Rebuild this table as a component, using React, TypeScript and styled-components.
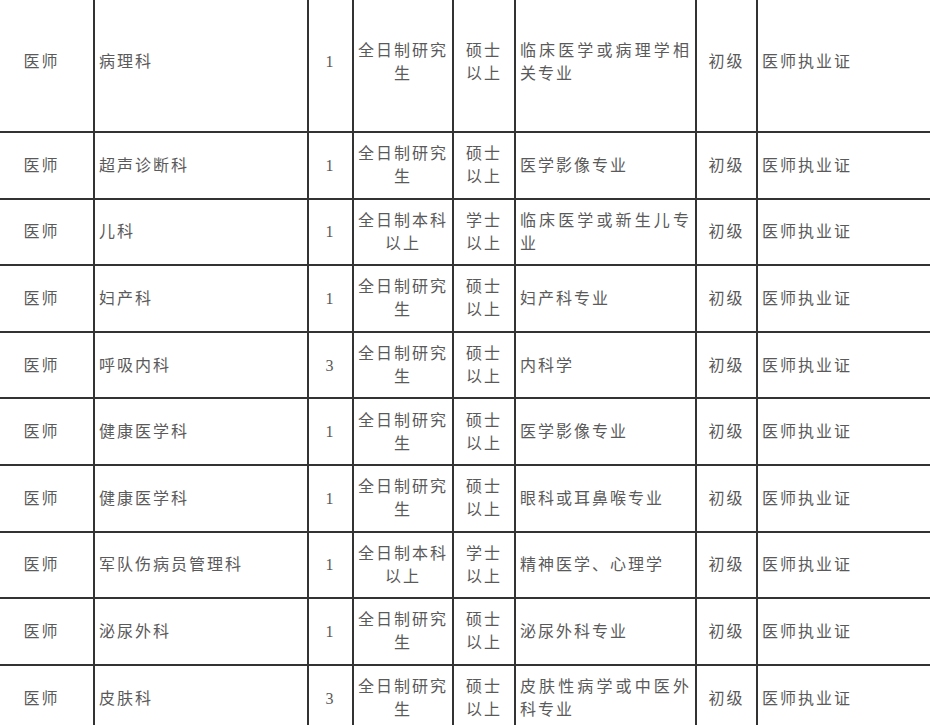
import styled, { createGlobalStyle } from "styled-components"

type Post = {
  title: string
  dept: string
  count: number
  study: string
  degree: string
  major: string
  level: string
  cert: string
}

const posts: Post[] = [
  { title: "医师", dept: "病理科", count: 1, study: "全日制研究生", degree: "硕士以上", major: "临床医学或病理学相关专业", level: "初级", cert: "医师执业证" },
  { title: "医师", dept: "超声诊断科", count: 1, study: "全日制研究生", degree: "硕士以上", major: "医学影像专业", level: "初级", cert: "医师执业证" },
  { title: "医师", dept: "儿科", count: 1, study: "全日制本科以上", degree: "学士以上", major: "临床医学或新生儿专业", level: "初级", cert: "医师执业证" },
  { title: "医师", dept: "妇产科", count: 1, study: "全日制研究生", degree: "硕士以上", major: "妇产科专业", level: "初级", cert: "医师执业证" },
  { title: "医师", dept: "呼吸内科", count: 3, study: "全日制研究生", degree: "硕士以上", major: "内科学", level: "初级", cert: "医师执业证" },
  { title: "医师", dept: "健康医学科", count: 1, study: "全日制研究生", degree: "硕士以上", major: "医学影像专业", level: "初级", cert: "医师执业证" },
  { title: "医师", dept: "健康医学科", count: 1, study: "全日制研究生", degree: "硕士以上", major: "眼科或耳鼻喉专业", level: "初级", cert: "医师执业证" },
  { title: "医师", dept: "军队伤病员管理科", count: 1, study: "全日制本科以上", degree: "学士以上", major: "精神医学、心理学", level: "初级", cert: "医师执业证" },
  { title: "医师", dept: "泌尿外科", count: 1, study: "全日制研究生", degree: "硕士以上", major: "泌尿外科专业", level: "初级", cert: "医师执业证" },
  { title: "医师", dept: "皮肤科", count: 3, study: "全日制研究生", degree: "硕士以上", major: "皮肤性病学或中医外科专业", level: "初级", cert: "医师执业证" },
]

const widths = [94, 214, 45, 100, 62, 181, 61, 220]

const GlobalStyle = createGlobalStyle`
  html, body {
    margin: 0;
    padding: 0;
    background: #fff;
    overflow: hidden;
  }
  body {
    width: 930px;
    height: 725px;
  }
`

export default function App() {
  return (
    <>
      <GlobalStyle />
      <Sheet>
        <Table>
          <colgroup>
            {widths.map((w, i) => (
              <col key={i} style={{ width: w }} />
            ))}
          </colgroup>
          <tbody>
            {posts.map((p, i) => (
              <Row key={i} $first={i === 0}>
                <Cell $align="center" $edge>{p.title}</Cell>
                <Cell $align="justify">{p.dept}</Cell>
                <Cell $align="center">{p.count}</Cell>
                <Cell $align="center">{p.study}</Cell>
                <Cell $align="center" $narrow>{p.degree}</Cell>
                <Cell $align="justify">{p.major}</Cell>
                <Cell $align="center">{p.level}</Cell>
                <Cell $align="left">{p.cert}</Cell>
              </Row>
            ))}
          </tbody>
        </Table>
      </Sheet>
    </>
  )
}

const Sheet = styled.div`
  width: 930px;
  height: 725px;
  overflow: hidden;
`

const Table = styled.table`
  table-layout: fixed;
  border-collapse: collapse;
  width: ${widths.reduce((a, b) => a + b, 0)}px;
  font-family: "Liberation Serif", "Noto Sans CJK SC", serif;
  font-size: 16px;
  line-height: 23px;
  letter-spacing: 2px;
  color: #5a5a5a;
`

const Row = styled.tr<{ $first?: boolean }>`
  height: ${p => (p.$first ? "132px" : "66.6px")};

  & > td {
    border-top: ${p => (p.$first ? "none" : "2px solid #333")};
    padding-bottom: ${p => (p.$first ? "8px" : "0")};
  }
`

const Cell = styled.td<{ $align: "center" | "justify" | "left"; $edge?: boolean; $narrow?: boolean }>`
  border: 2px solid #333;
  border-left: ${p => (p.$edge ? "none" : "2px solid #333")};
  padding: 0 4px 0 ${p => (p.$edge ? "0" : "4px")};
  padding-right: ${p => (p.$edge ? "10px" : p.$narrow ? "10px" : "4px")};
  padding-left: ${p => (p.$narrow ? "10px" : p.$edge ? "0" : "4px")};
  vertical-align: middle;
  text-align: ${p => p.$align};
  word-break: break-all;
`
